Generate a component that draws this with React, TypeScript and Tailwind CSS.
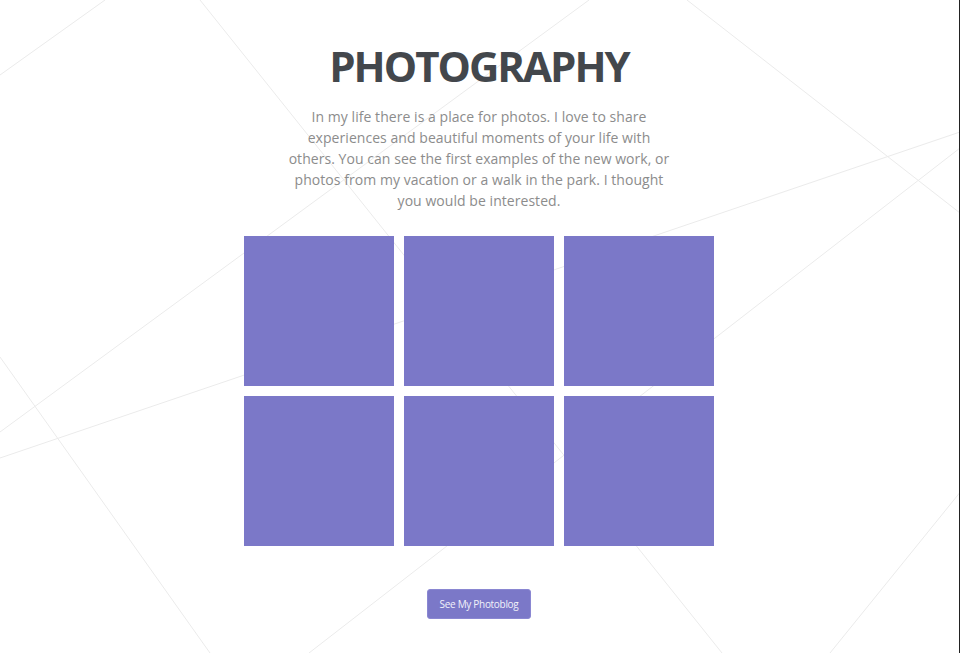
import React from "react";

const lines: [number, number, number, number][] = [
  [200, 0, 722, 653],
  [0, 75, 105, 0],
  [0, 357, 210, 653],
  [0, 432, 589, 0],
  [0, 458, 960, 132],
  [687, 0, 960, 213],
  [960, 148, 309, 653],
  [1000, 443, 830, 653],
];

export default function App() {
  return (
    <div className="relative w-[960px] h-[653px] overflow-hidden bg-white border-r border-[#222]" style={{ fontFamily: '"Open Sans", "Noto Sans", sans-serif' }}>
      <svg className="absolute inset-0" width="960" height="653" viewBox="0 0 960 653">
        {lines.map(([x1, y1, x2, y2], i) => (
          <line key={i} x1={x1} y1={y1} x2={x2} y2={y2} stroke="#ebebeb" strokeWidth="1" />
        ))}
      </svg>
      <div className="relative w-[958px] flex flex-col items-center pt-[40px]">
        <h1 className="text-[42px] leading-[52px] font-bold text-[#43474c] tracking-[-2px]">PHOTOGRAPHY</h1>
        <p className="mt-[14px] text-center text-[14px] leading-[21px] tracking-[0.05px] text-[#8c8c8c] whitespace-nowrap">
          In my life there is a place for photos. I love to share
          <br />
          experiences and beautiful moments of your life with
          <br />
          others. You can see the first examples of the new work, or
          <br />
          photos from my vacation or a walk in the park. I thought
          <br />
          you would be interested.
        </p>
        <div className="mt-[25px] grid grid-cols-[150px_150px_150px] gap-[10px]">
          {Array.from({ length: 6 }).map((_, i) => (
            <div key={i} className="w-[150px] h-[150px] bg-[#7b78c8]" />
          ))}
        </div>
        <button className="mt-[43px] w-[104px] h-[30px] rounded-[3px] bg-[#7b78c8] border border-[#8a87d2] text-[10px] tracking-[-0.3px] text-[#f2f2fa]">
          See My Photoblog
        </button>
      </div>
    </div>
  );
}
